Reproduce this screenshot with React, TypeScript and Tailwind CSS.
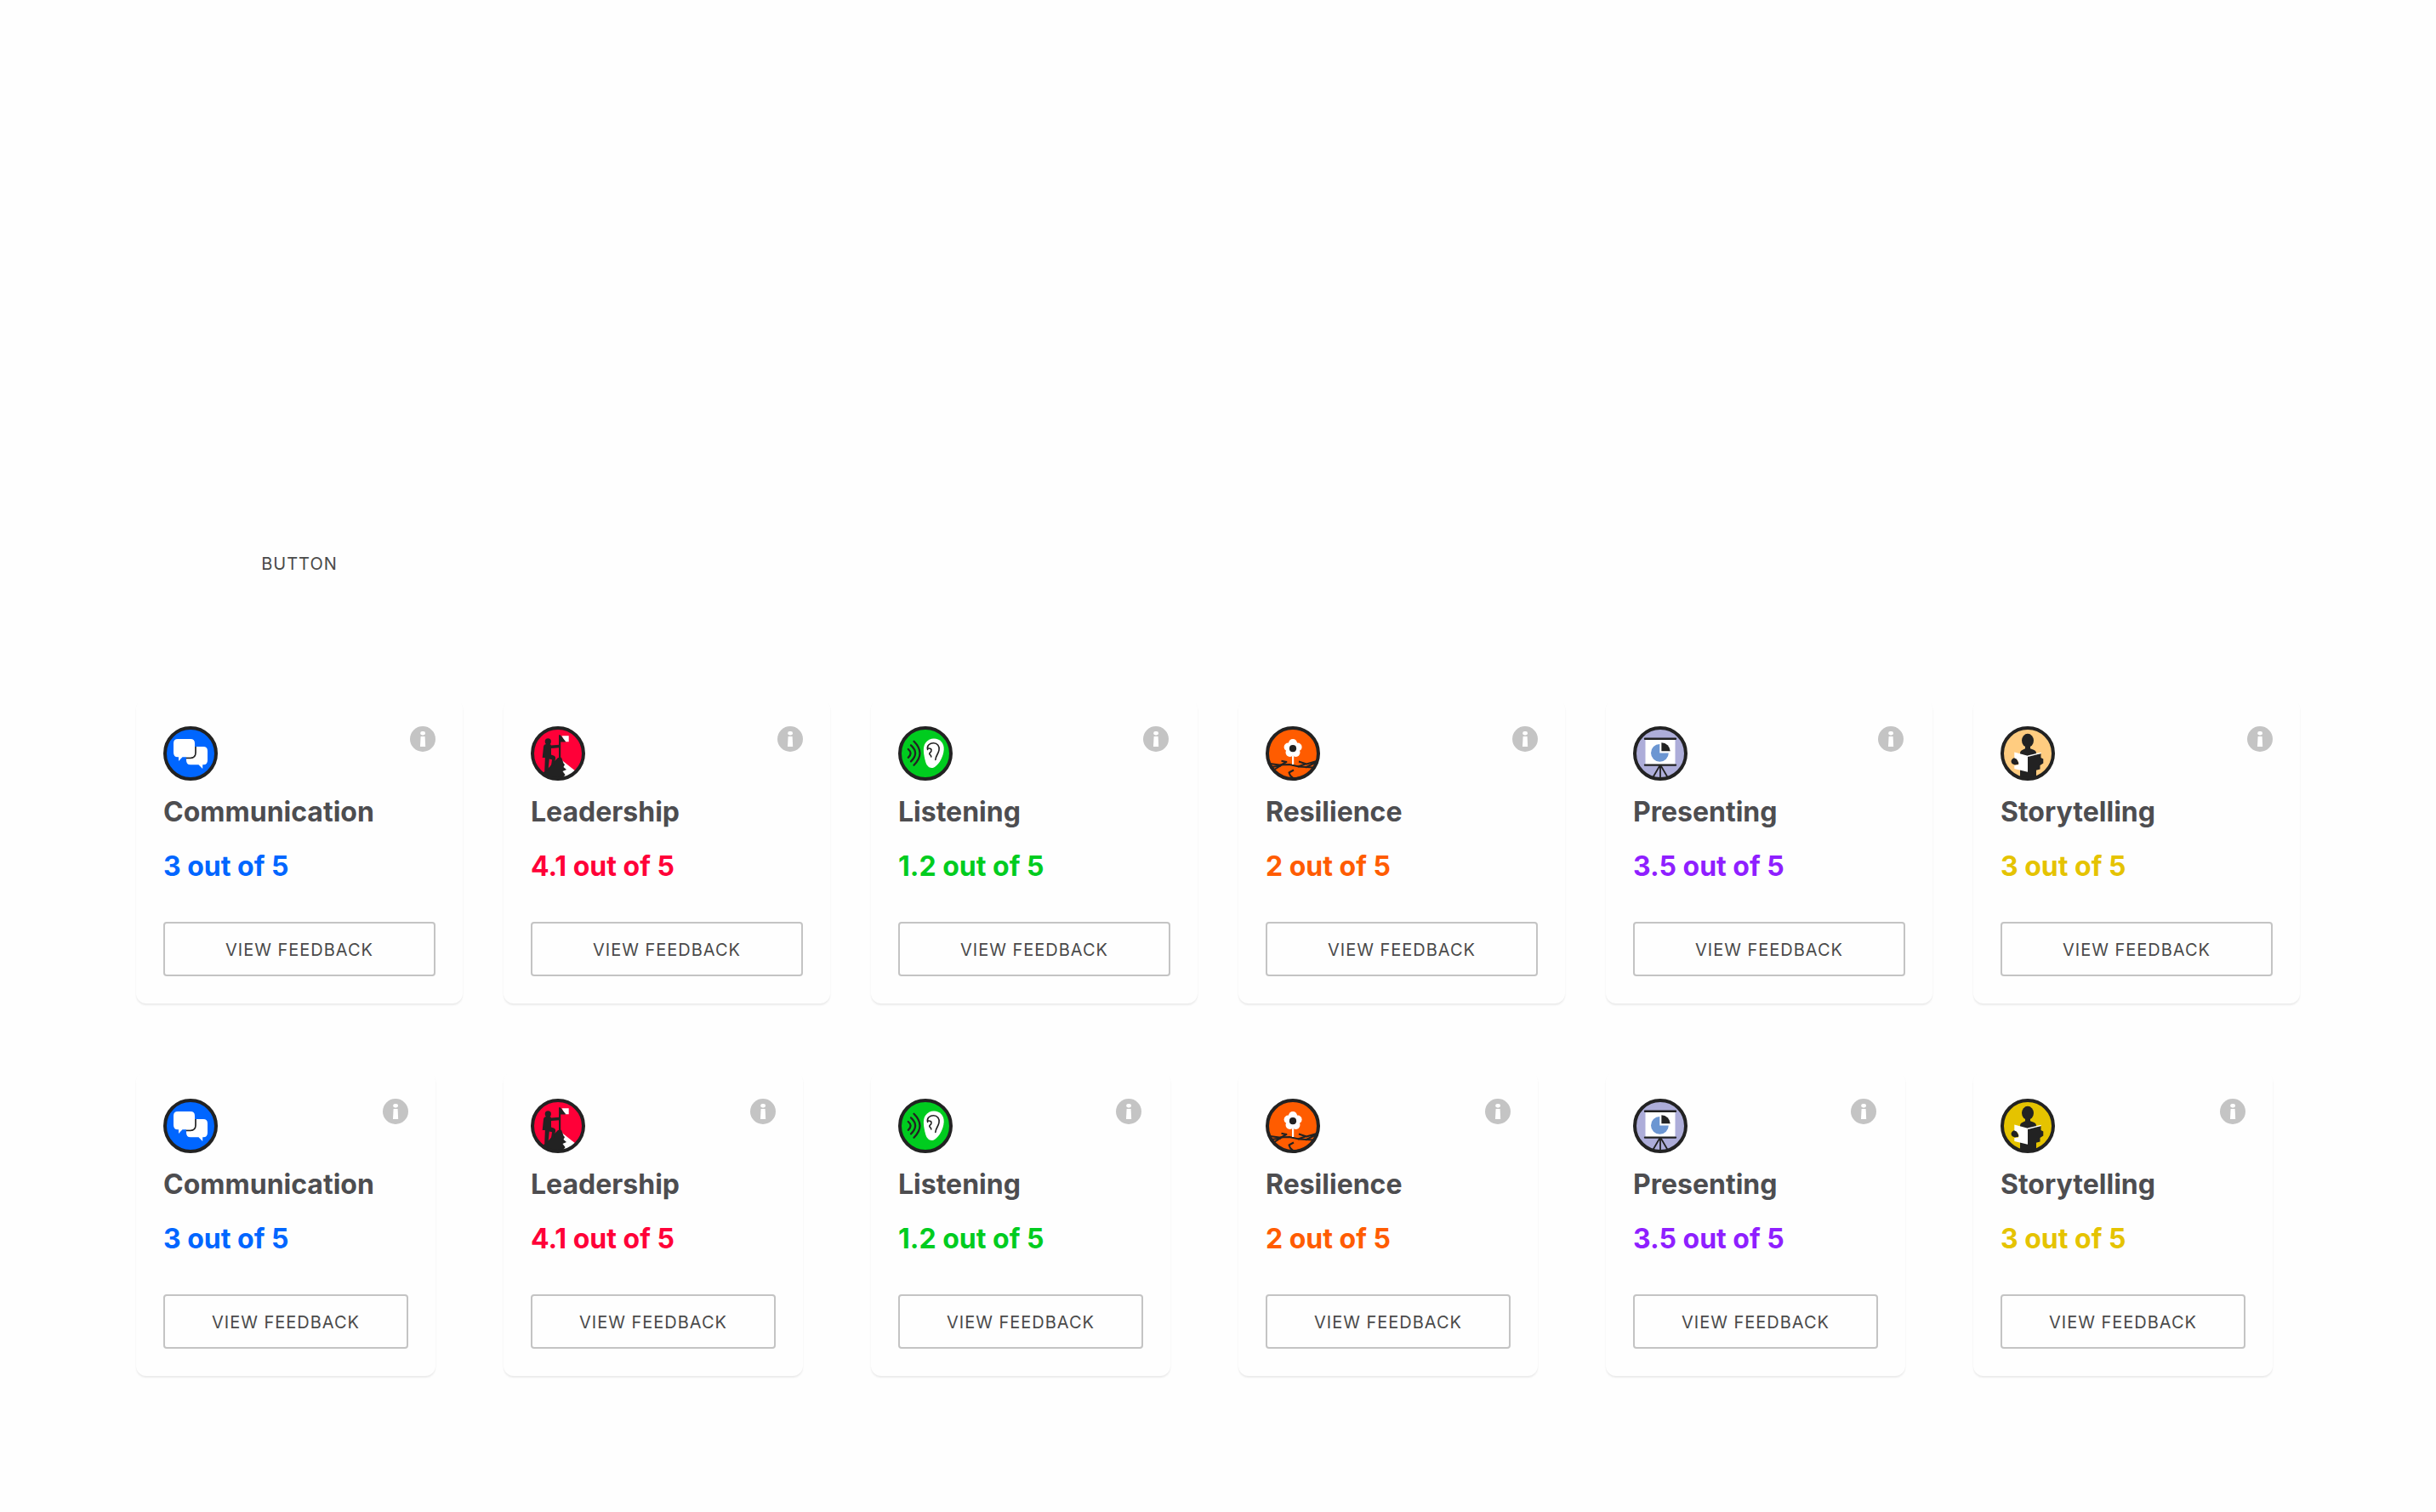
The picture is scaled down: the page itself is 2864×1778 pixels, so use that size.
import React from "react";

const INK = "#222222";

type Glyph = "chat" | "leader" | "ear" | "flower" | "board" | "reader";

function Art({ kind }: { kind: Glyph }) {
  switch (kind) {
    case "chat":
      return (
        <g>
          <path d="M32 24H47Q52 24 52 29V40Q52 45.3 47 45.3H46.2V50L41.5 45.3H32Q27 45.3 27 40V29Q27 24 32 24Z" fill="#fff" />
          <path d="M38 24V31Q38 37.3 32 37.3H27" fill="none" stroke={INK} strokeWidth="1.7" />
          <path d="M17 15H32Q37 15 37 20V31Q37 36.3 32 36.3H22.5L18 41V36.3H17Q12 36.3 12 31V20Q12 15 17 15Z" fill="#fff" />
        </g>
      );
    case "leader":
      return (
        <g>
          <path d="M36 39.5L53 53L46 60L34 62Z" fill="#fff" />
          <path d="M13 56L22 48L26 43L32 37L36 36.8L38.7 43.7L40 45L38.5 48L42 51L37.5 53L40.5 57L37 62L24 62Z" fill={INK} />
          <path d="M36.5 11.2H44.7V18.3H40Z" fill="#fff" />
          <path d="M33 38V10.3H34.7L41.5 18.5H35.2V40H33Z" fill={INK} />
          <circle cx="20.3" cy="17.9" r="3.6" fill={INK} />
          <path d="M15 24Q15.5 21 18.5 21H21.5Q23.6 21 24 22.4L33.5 21.8V25.2L24 26V33.4L27.5 34.8Q29.5 35.6 29.1 38L27 46.5L24 46.2L25 39.2L21.8 38.6L20.5 52L16.2 53L16.8 38V37H13.7Z" fill={INK} />
        </g>
      );
    case "ear":
      return (
        <g>
          <path d="M42 14.6C49 14.6 54.2 20 53.7 27.5C53.2 35 49 43.5 43.5 47.5C38.5 51 34 48 32.2 42C30 34 28.4 25 32 19.8C34.5 16.4 38 14.6 42 14.6Z" fill="#fff" />
          <path d="M34.6 27.4C33.2 22.5 37.5 19.8 41.5 19.8C46 19.8 49 23.5 48 28.2C47.1 33 44 34.8 43.8 39.5M35.8 26C39.6 26 40 29 37.4 31.2C35.4 33 38.8 33.4 38.8 36" fill="none" stroke={INK} strokeWidth="1.6" strokeLinecap="round" />
          <g fill="none" stroke={INK} strokeWidth="2.3" strokeLinecap="round">
            <path d="M11.8 27Q17.4 31.8 11.8 36.8" />
            <path d="M15 22.4Q25.2 31.8 15 41.4" />
            <path d="M18.5 17.8Q32.5 31.8 18.5 45.7" />
          </g>
        </g>
      );
    case "flower":
      return (
        <g>
          <g fill="none" stroke={INK} strokeWidth="2" strokeLinejoin="round">
            <path d="M5 44L16 45.5L28 45L39 47.5L56 48.5" />
            <path d="M11 50.5L24.5 42L18.5 40.8M16 46.5L25 41.5" />
            <path d="M39 41.5L48 44.5L60 41M47 48.5L60 42M38 47.5L48 44" />
            <path d="M33 51.5L27.5 54.5L29 58L33.5 62" />
            <path d="M6 48L18 46.5" />
          </g>
          <path d="M31 35H33.2V45H31Z" fill="#fff" />
          <g fill="#fff">
            <circle cx="32" cy="20.2" r="5.1" />
            <circle cx="26.6" cy="24.5" r="5" />
            <circle cx="37.6" cy="24.5" r="5" />
            <circle cx="28.6" cy="30.8" r="5.1" />
            <circle cx="35.4" cy="30.8" r="5.1" />
          </g>
          <circle cx="32" cy="26.2" r="4.1" fill={INK} />
        </g>
      );
    case "board":
      return (
        <g>
          <path d="M14.5 15H49.5V45H14.5Z" fill="#fff" />
          <g fill="none" stroke={INK} strokeLinecap="round">
            <path d="M14 14.7H50M14 45.6H50" strokeWidth="2.4" />
            <path d="M31 47L24 59M33 47L40 59M32 47V61" strokeWidth="1.8" />
          </g>
          <path d="M31.3 21V31.4H41.8A10.4 10.4 0 1 1 31.3 21Z" fill="#6c96d2" />
          <path d="M33.4 19.2A10.4 10.4 0 0 1 43.7 29.3H33.4Z" fill={INK} />
        </g>
      );
    case "reader":
      return (
        <g>
          <ellipse cx="32" cy="16.8" rx="7" ry="8" fill={INK} />
          <path d="M29 22H35V26.2L39 27.8Q42 28.8 42 32V62H23V32Q23 28.8 26 27.8L29 26.2Z" fill={INK} />
          <path d="M12.5 41Q13 37.5 18 36.5L22 44.5L17 45.5Q12.5 44.5 12.5 41Z" fill={INK} />
          <path d="M32 35.5L47.5 32V37L50.3 38.5V43.5L46.5 46V50.5L41 52V60H32Z" fill={INK} />
          <path d="M16.3 30.5L32 34.8V53.7L16.3 50V46L21 45.5Q22.5 42 18.8 38.6L16.3 37.5Z" fill="#fff" />
          <path d="M32 35.2L47.7 31.4" stroke="#fff" strokeWidth="1.4" />
        </g>
      );
  }
}

function SkillIcon({ kind, fill }: { kind: Glyph; fill: string }) {
  return (
    <svg viewBox="0 0 64 64" className="size-16 shrink-0" aria-hidden="true">
      <defs>
        <clipPath id="disc">
          <circle cx="32" cy="32" r="31" />
        </clipPath>
      </defs>
      <circle cx="32" cy="32" r="30" fill={fill} />
      <g clipPath="url(#disc)">
        <Art kind={kind} />
      </g>
      <circle cx="32" cy="32" r="30" fill="none" stroke={INK} strokeWidth="4" />
    </svg>
  );
}

function InfoIcon() {
  return (
    <svg viewBox="0 0 30 30" className="size-[30px] shrink-0" aria-hidden="true">
      <circle cx="15" cy="15" r="15" fill="#c4c4c4" />
      <rect x="12.2" y="6" width="5.8" height="4.4" rx="2.1" fill="#fff" />
      <path d="M12.6 12H17.6L18.2 24H12Z" fill="#fff" />
    </svg>
  );
}

type Skill = { name: string; score: string; color: string; glyph: Glyph; fill: string; altFill?: string; inset?: boolean };

const skills: Skill[] = [
  { name: "Communication", score: "3 out of 5", color: "text-[#0066ff]", glyph: "chat", fill: "#0066ff" },
  { name: "Leadership", score: "4.1 out of 5", color: "text-[#ff0038]", glyph: "leader", fill: "#ff0038" },
  { name: "Listening", score: "1.2 out of 5", color: "text-[#00cc1f]", glyph: "ear", fill: "#00cc1f", inset: true },
  { name: "Resilience", score: "2 out of 5", color: "text-[#ff5c00]", glyph: "flower", fill: "#ff5c00" },
  { name: "Presenting", score: "3.5 out of 5", color: "text-[#8f1fff]", glyph: "board", fill: "#adadd9", inset: true },
  { name: "Storytelling", score: "3 out of 5", color: "text-[#e5c300]", glyph: "reader", fill: "#ffcc80", altFill: "#e5c300" },
];

function Card({ skill, compact }: { skill: Skill; compact: boolean }) {
  return (
    <article
      className={`flex h-[358px] flex-col rounded-xl bg-[#fefefe] p-8 shadow-[0_2px_2px_rgba(0,0,0,0.08)] ${compact ? "w-[352px]" : "w-[384px]"}`}
    >
      <div className={`flex items-start justify-between ${skill.inset ? "pr-0.5" : ""}`}>
        <SkillIcon kind={skill.glyph} fill={compact && skill.altFill ? skill.altFill : skill.fill} />
        <InfoIcon />
      </div>
      <h2 className="mt-[17px] text-[32px] leading-10 font-bold text-[#4d4d50]">{skill.name}</h2>
      <p className={`mt-6 text-[32px] leading-10 font-bold ${skill.color}`}>{skill.score}</p>
      <button className="mt-auto h-16 w-full rounded border-2 border-[#c4c4c4] pt-0.5 text-[20px] tracking-[1px] text-[#4a4a4a]">
        VIEW FEEDBACK
      </button>
    </article>
  );
}

export default function App() {
  return (
    <main className="flex h-[1778px] w-[2864px] flex-col bg-[#fefefe] px-40 font-['Inter',sans-serif]">
      <div className="mt-[630px] flex h-16 w-96 items-center justify-center pt-0.5 text-[20px] tracking-[1px] text-[#4a4a4a]">
        BUTTON
      </div>
      <section className="mt-32 grid grid-cols-[repeat(6,432px)]">
        {skills.map((s) => (
          <Card key={s.name} skill={s} compact={false} />
        ))}
      </section>
      <section className="mt-20 grid grid-cols-[repeat(6,432px)]">
        {skills.map((s) => (
          <Card key={s.name} skill={s} compact />
        ))}
      </section>
    </main>
  );
}
